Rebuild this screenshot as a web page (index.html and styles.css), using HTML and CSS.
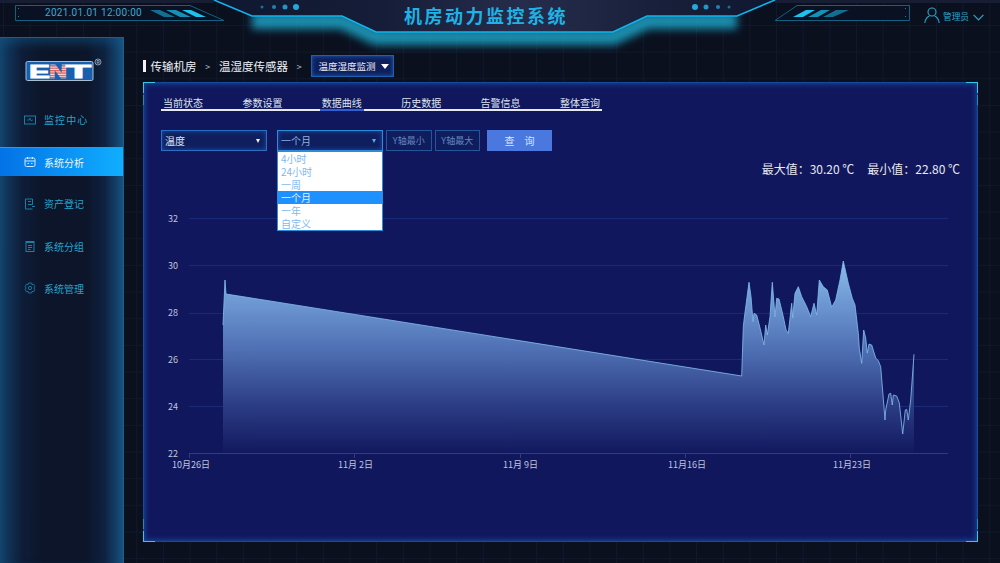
FILE: index.html
```html
<!DOCTYPE html>
<html lang="zh">
<head>
<meta charset="utf-8">
<title>机房动力监控系统</title>
<link rel="stylesheet" href="styles.css">
</head>
<body>
<div class="app">
  <header class="header">
    <svg class="header-art" viewBox="0 0 1000 60" width="1000" height="60" aria-hidden="true">
      <defs>
        <linearGradient id="hfill" x1="0" y1="0" x2="1" y2="0">
          <stop offset="0" stop-color="#0f1830"/>
          <stop offset=".3" stop-color="#151d38"/>
          <stop offset=".55" stop-color="#262d4c"/>
          <stop offset=".8" stop-color="#181f3a"/>
          <stop offset="1" stop-color="#0f1830"/>
        </linearGradient>
        <filter id="soft" filterUnits="userSpaceOnUse" x="200" y="0" width="600" height="60"><feGaussianBlur stdDeviation="4"/></filter>
      </defs>
      <polygon points="0,0 1000,0 1000,3 775,3 775,0 214,0 214,3 0,3" fill="#171d33"/>
      <polyline class="glow" points="252,21 342,21 376,37 613,37 647,21 737,21" filter="url(#soft)"/>
      <polygon points="214,0 252,16 342,16 376,32 613,32 647,16 737,16 775,0" fill="url(#hfill)"/>
      <polyline points="214,0 252,16 342,16 376,32 613,32 647,16 737,16 775,0" fill="none" stroke="#10b4ee" stroke-width="1.6"/>
      <circle cx="262" cy="7" r="1.500" fill="#1c6f9c"/><circle cx="274" cy="7" r="2" fill="#1f84b0"/><circle cx="285" cy="7" r="2.500" fill="#2297c6"/><circle cx="296" cy="7" r="3" fill="#25a8dc"/>
      <circle cx="695" cy="7" r="3" fill="#25a8dc"/><circle cx="706" cy="7" r="2.500" fill="#2297c6"/><circle cx="718" cy="7" r="2" fill="#1f84b0"/><circle cx="729" cy="7" r="1.500" fill="#1c6f9c"/>
      <polygon points="15.500,5.500 190,5.500 224,20.500 15.500,20.500" fill="#0a1122" stroke="#14607f"/>
      <polygon points="797,5.500 909.500,5.500 909.500,20.500 775,20.500" fill="#0a1122" stroke="#14607f"/>
      <g fill="#1a7da0"><rect x="18" y="8" width="1" height="1"/><rect x="18" y="16" width="1" height="1"/><rect x="905" y="8" width="1" height="1"/><rect x="905" y="16" width="1" height="1"/></g>
      <g>
        <polygon points="150,10 160,10 175,17 164,17" fill="#126f92"/>
        <polygon points="166,10 176,10 191,17 180,17" fill="#1590b8"/>
        <polygon points="182,10 191,10 206,17 196,17" fill="#1cc2ee"/>
        <polygon points="793,17 803,17 815,10 806,10" fill="#1cc2ee"/>
        <polygon points="808,17 818,17 830,10 821,10" fill="#1590b8"/>
        <polygon points="823,17 833,17 849,10 836,10" fill="#126f92"/>
      </g>
    </svg>
    <div class="clock">2021.01.01 12:00:00</div>
    <h1 class="title">机房动力监控系统</h1>
    <div class="user">
      <svg class="user-icon" viewBox="0 0 16 16" width="16" height="16" aria-hidden="true"><circle cx="8" cy="5" r="4" fill="none" stroke="#2aa6cc" stroke-width="1.100"/><path d="M.8 16c.4-4 3-6.600 4.600-7M15.200 16c-.4-4-3-6.600-4.600-7" fill="none" stroke="#2aa6cc" stroke-width="1.100"/></svg>
      <span>管理员</span>
      <svg class="chev" viewBox="0 0 11 7" width="11" height="7" aria-hidden="true"><path d="M.6.8 5.500 5.800 10.400.8" fill="none" stroke="#2aa6cc" stroke-width="1.200"/></svg>
    </div>
  </header>

  <div class="body">
    <aside class="sidebar">
      <div class="logo">
        <svg viewBox="0 0 78 24" width="78" height="24" aria-label="ENT">
          <defs>
            <pattern id="stripes" width="2" height="2.400" patternUnits="userSpaceOnUse"><rect width="2" height="1.300" fill="#e8574f"/><rect y="1.300" width="2" height="1.100" fill="#fbe3e0"/></pattern>
          </defs>
          <rect x="1" y="3.500" width="67" height="19" rx="1.500" fill="#1860ae" stroke="#a9bdd2"/>
          <text class="logo-e" x="4" y="19.500" textLength="21" lengthAdjust="spacingAndGlyphs">E</text>
          <text class="logo-n" x="24" y="19.500" textLength="18" lengthAdjust="spacingAndGlyphs">N</text>
          <text class="logo-e" x="41" y="19.500" textLength="25" lengthAdjust="spacingAndGlyphs">T</text>
          <circle cx="73" cy="4" r="3" fill="none" stroke="#9fb4c8" stroke-width=".8"/>
          <text class="logo-r" x="71.400" y="5.700">R</text>
        </svg>
      </div>
      <nav class="nav">
        <a class="nav-item">
          <svg viewBox="0 0 12 12" width="12" height="12" aria-hidden="true"><rect x=".5" y="2" width="11" height="8" fill="none" stroke="currentColor"/><path d="M3 6h2l1-2 1 3 1-1h1" fill="none" stroke="currentColor" stroke-width=".8"/></svg>
          <span class="wide">监控中心</span>
        </a>
        <a class="nav-item is-active">
          <svg viewBox="0 0 12 12" width="12" height="12" aria-hidden="true"><rect x="1" y="2" width="10" height="8.500" rx="1.500" fill="none" stroke="currentColor"/><path d="M1 5h10M3.500 1v2M8.500 1v2M3.500 7.500h1.500M7 7.500h1.500" fill="none" stroke="currentColor"/></svg>
          <span>系统分析</span>
        </a>
        <a class="nav-item">
          <svg viewBox="0 0 12 12" width="12" height="12" aria-hidden="true"><path d="M1.500 11V1h7v5.500H4M1.500 11h7M4 3.500h3M8 8.500h3" fill="none" stroke="currentColor"/></svg>
          <span>资产登记</span>
        </a>
        <a class="nav-item">
          <svg viewBox="0 0 12 12" width="12" height="12" aria-hidden="true"><rect x="2" y="1.500" width="8" height="10" fill="none" stroke="currentColor"/><path d="M2 2.500h8M4 5.500h4M4 7.500h4M4 9.500h2.500" fill="none" stroke="currentColor"/></svg>
          <span>系统分组</span>
        </a>
        <a class="nav-item">
          <svg viewBox="0 0 12 12" width="12" height="12" aria-hidden="true"><path d="M4.500 1h3l.5 1.600 1.500-.4 1.400 2.400L9.800 6l1.100 1.400-1.400 2.400-1.500-.4L7.500 11h-3L4 9.400l-1.500.4L1.100 7.400 2.200 6 1.100 4.600 2.500 2.200 4 2.600z" fill="none" stroke="currentColor" stroke-width=".9"/><circle cx="6" cy="6" r="1.700" fill="none" stroke="currentColor" stroke-width=".9"/></svg>
          <span>系统管理</span>
        </a>
      </nav>
    </aside>

    <main class="main">
      <div class="crumbs">
        <span class="crumb-bar"></span>
        <span class="crumb">传输机房</span>
        <span class="crumb-sep">&gt;</span>
        <span class="crumb">温湿度传感器</span>
        <span class="crumb-sep">&gt;</span>
        <span class="crumb-box">温度湿度监测<i class="crumb-caret"></i></span>
      </div>

      <section class="panel">
        <span class="corner tl"></span><span class="corner tr"></span><span class="corner bl"></span><span class="corner br"></span>
        <div class="tabs">
          <a class="tab">当前状态</a>
          <a class="tab">参数设置</a>
          <a class="tab is-active">数据曲线</a>
          <a class="tab">历史数据</a>
          <a class="tab">告警信息</a>
          <a class="tab">整体查询</a>
        </div>
        <div class="controls">
          <div class="select"><span>温度</span><i class="caret"></i></div>
          <div class="select select-open">
            <span>一个月</span><i class="caret caret-blue"></i>
            <ul class="dropdown">
              <li>4小时</li>
              <li>24小时</li>
              <li>一周</li>
              <li class="is-selected">一个月</li>
              <li>一年</li>
              <li>自定义</li>
            </ul>
          </div>
          <div class="inputs">
            <div class="input">Y轴最小</div>
            <div class="input">Y轴最大</div>
          </div>
          <button class="query" type="button">查&emsp;询</button>
        </div>
        <div class="stats"><span>最大值：30.20 ℃</span><span>最小值：22.80 ℃</span></div>
        <svg class="chart" viewBox="150 190 810 290" width="810" height="290" role="img" aria-label="温度曲线">
          <defs>
            <linearGradient id="area" x1="0" y1="0" x2="0" y2="1">
              <stop offset="0" stop-color="#8abde8"/>
              <stop offset=".2" stop-color="#6f9ad4"/>
              <stop offset=".46" stop-color="#4f70b4"/>
              <stop offset=".75" stop-color="#2c3d85"/>
              <stop offset="1" stop-color="#12195e"/>
            </linearGradient>
          </defs>
          <g class="grid">
            <line x1="189" x2="948" y1="218.500" y2="218.500"/>
            <line x1="189" x2="948" y1="265.500" y2="265.500"/>
            <line x1="189" x2="948" y1="313.500" y2="313.500"/>
            <line x1="189" x2="948" y1="359.500" y2="359.500"/>
            <line x1="189" x2="948" y1="406.500" y2="406.500"/>
          </g>
          <path class="area" d="M223 453V325L225 280L226 294L741.700 376L743.300 326.700L744.300 318L749 282.300L751 296.700L753 321.700L754 313.300L756.700 315L760 328L764 345L765.700 325L767.300 335L770 316.700L772.300 282.300L775 316.700L776.700 298.300L779 299L783.300 316.700L786 330L788.300 333.300L791.700 303.300L792.700 318L795 293.300L798.300 286.700L801.700 296.700L806.700 306.700L810.700 316.700L814 303.300L816.700 315L819.300 280L823.300 286.700L827.300 290L831.700 307.300L835.700 300L840 280L843.300 261L848.300 283.300L852.300 298.300L855 305L858.300 333.300L859.300 348.300L861.700 363.300L863.700 330L865.700 338L867.300 353L869 344L871.700 345L875.700 358L878.300 360.700L880.700 366.700L885 420L885.700 410L889 394L890.700 393.300L892.300 405L893.300 395L896.700 396L899.300 403L902.700 434L905.300 410L906.700 409.300L908.300 420L910.700 400L914 354.300V453Z"/>
          <path class="line" d="M223 325L225 280L226 294L741.700 376L743.300 326.700L744.300 318L749 282.300L751 296.700L753 321.700L754 313.300L756.700 315L760 328L764 345L765.700 325L767.300 335L770 316.700L772.300 282.300L775 316.700L776.700 298.300L779 299L783.300 316.700L786 330L788.300 333.300L791.700 303.300L792.700 318L795 293.300L798.300 286.700L801.700 296.700L806.700 306.700L810.700 316.700L814 303.300L816.700 315L819.300 280L823.300 286.700L827.300 290L831.700 307.300L835.700 300L840 280L843.300 261L848.300 283.300L852.300 298.300L855 305L858.300 333.300L859.300 348.300L861.700 363.300L863.700 330L865.700 338L867.300 353L869 344L871.700 345L875.700 358L878.300 360.700L880.700 366.700L885 420L885.700 410L889 394L890.700 393.300L892.300 405L893.300 395L896.700 396L899.300 403L902.700 434L905.300 410L906.700 409.300L908.300 420L910.700 400L914 354.300"/>
          <g class="axis">
            <line x1="189" x2="948" y1="453.500" y2="453.500"/>
            <line x1="189.500" x2="189.500" y1="453" y2="458"/>
            <line x1="354.500" x2="354.500" y1="453" y2="458"/>
            <line x1="520.500" x2="520.500" y1="453" y2="458"/>
            <line x1="685.500" x2="685.500" y1="453" y2="458"/>
            <line x1="850.500" x2="850.500" y1="453" y2="458"/>
          </g>
          <g class="labels">
            <text x="168" y="222">32</text>
            <text x="168" y="269">30</text>
            <text x="168" y="316">28</text>
            <text x="168" y="363">26</text>
            <text x="168" y="410">24</text>
            <text x="168" y="456.500">22</text>
            <text x="172" y="467.500">10月26日</text>
            <text x="338" y="467.500">11月 2日</text>
            <text x="503" y="467.500">11月 9日</text>
            <text x="668" y="467.500">11月16日</text>
            <text x="833" y="467.500">11月23日</text>
          </g>
        </svg>
      </section>
    </main>
  </div>
</div>
</body>
</html>
```

FILE: styles.css
```css
* { box-sizing: border-box; }

html, body { margin: 0; height: 100%; }

body {
  overflow: hidden;
  background-color: #0b101f;
  background-image:
    linear-gradient(#111829 1px, transparent 1px),
    linear-gradient(90deg, #111829 1px, transparent 1px);
  background-size: 26.67px 26.67px;
  background-position: 3px 25px;
  font-family: "Noto Sans CJK SC", "Noto Sans", sans-serif;
  color: #fff;
}

.app { width: 1000px; height: 563px; display: flex; flex-direction: column; }

/* header */
.header {
  position: relative;
  height: 37px;
  flex: none;
  display: flex;
  align-items: flex-start;
}
.header-art { position: absolute; left: 0; top: 0; pointer-events: none; }
.glow { fill: none; stroke: #1ea6c8; stroke-width: 16; opacity: .85; }
.clock {
  position: relative;
  margin: 6px 0 0 45px;
  width: 120px;
  font: 10px/14px Roboto, sans-serif;
  letter-spacing: .3px;
  white-space: nowrap;
  color: #3fa9d2;
}
.title {
  position: relative;
  margin: 4px 0 0 239px;
  width: 190px;
  font-size: 18px;
  line-height: 22px;
  font-weight: 700;
  letter-spacing: 2.500px;
  white-space: nowrap;
  color: #1eb3e6;
}
.user {
  position: relative;
  margin: 5px 0 0 auto;
  padding-right: 16px;
  display: flex;
  align-items: center;
  gap: 3px;
  font-size: 8.700px;
  line-height: 16px;
  color: #2aa6cc;
}
.user span { margin-top: 4px; }
.chev { margin: 5px 0 0 1px; }

/* layout */
.body { position: relative; flex: 1; display: flex; min-height: 0; }

.sidebar {
  width: 124px;
  flex: none;
  padding-top: 20px;
  background: linear-gradient(90deg, #124068 0, #0d1d38 18%, #0c1529 35%, #0c1529 70%, #0e2240 85%, #17517f 100%);
  border: 1px solid #215d88;
  border-left: 0;
  border-bottom: 0;
  box-shadow: inset 0 6px 10px rgba(20, 90, 140, .45);
}
.logo { padding-left: 25px; height: 24px; margin-bottom: 23px; }
.logo svg { display: block; }
.logo-e, .logo-n {
  font: 900 18px/1 "Liberation Sans", sans-serif;
  fill: #fff;
  stroke: #fff;
  stroke-width: .9;
}
.logo-n { fill: url(#stripes); stroke: url(#stripes); }
.logo-r { font: 700 4.500px "Liberation Sans", sans-serif; fill: #9fb4c8; }

.nav { display: flex; flex-direction: column; gap: 13.200px; }
.nav-item {
  height: 29px;
  display: flex;
  align-items: center;
  gap: 8px;
  padding-left: 24px;
  font-size: 10px;
  color: #26a4cc;
}
.nav-item svg { color: #1c7ea4; flex: none; }
.nav-item .wide { letter-spacing: 1.100px; }
.nav-item.is-active {
  color: #e8f6ff;
  background: linear-gradient(90deg, #0372e6, #10aeff);
  border-top: 1px solid #19a4f0;
}
.nav-item.is-active svg { color: #cfeaff; }

.main { flex: 1; padding: 18px 22px 21px 19px; display: flex; flex-direction: column; gap: 5px; min-width: 0; }

/* breadcrumb */
.crumbs { height: 22px; display: flex; align-items: center; color: #eef1f6; flex: none; }
.crumb-bar { width: 2.500px; height: 12px; background: #f4f4f6; margin-right: 5px; }
.crumb { font-size: 11.500px; line-height: 22px; }
.crumb-sep { font-size: 9px; width: 22.500px; text-align: center; color: #b9c2d0; }
.crumb-box {
  display: flex;
  align-items: center;
  height: 22px;
  width: 83px;
  padding-left: 7px;
  font-size: 9.500px;
  background: #0f1f5e;
  border: 1px solid #1f5fb0;
  box-shadow: inset 0 0 4px #1f5fb0;
}
.crumb-caret {
  margin-left: 5px;
  border-left: 4px solid transparent;
  border-right: 4px solid transparent;
  border-top: 5px solid #fff;
}

/* panel */
.panel {
  position: relative;
  flex: 1;
  padding-top: 13px;
  background: #10175c;
  border: 1px solid #164a9c;
  box-shadow: inset 0 0 6px #1b5ab8;
}
.corner { position: absolute; width: 12px; height: 11px; border: 0 solid #35c8e8; }
.corner::after { content: ""; position: absolute; width: 1px; height: 10px; background: #1f8fb8; }
.corner.tl { left: -1px; top: -1px; border-left-width: 1px; border-top-width: 1px; }
.corner.tl::after { left: -1px; top: 12px; }
.corner.tr { right: -1px; top: -1px; border-right-width: 1px; border-top-width: 1px; }
.corner.tr::after { right: -1px; top: 12px; }
.corner.bl { left: -1px; bottom: -1px; border-left-width: 1px; border-bottom-width: 1px; }
.corner.bl::after { left: -1px; bottom: 12px; }
.corner.br { right: -1px; bottom: -1px; border-right-width: 1px; border-bottom-width: 1px; }
.corner.br::after { right: -1px; bottom: 12px; }

.tabs {
  margin-left: 17px;
  width: 441px;
  height: 15px;
  display: flex;
  justify-content: space-between;
  border-bottom: 2px solid #e6e8f2;
}
.tab {
  width: 44px;
  height: 15px;
  text-align: center;
  font-size: 10px;
  line-height: 13px;
  color: #dfe4f0;
  border-bottom: 2px solid transparent;
}
.tab.is-active { border-bottom-color: #2f5fd0; }

/* controls */
.controls { margin: 19px 0 0 17px; height: 21px; display: flex; }
.select {
  position: relative;
  width: 106px;
  margin-right: 10px;
  padding-left: 3px;
  display: flex;
  align-items: center;
  justify-content: space-between;
  font-size: 10px;
  color: #dfe6f6;
  background: #0f1f5e;
  border: 1px solid #2a6fc4;
  box-shadow: inset 0 0 5px #1c4fa8;
}
.select-open { margin-right: 3px; color: #8fb2e4; border-color: #2d8cd8; }
.caret {
  margin-right: 6px;
  border-left: 2.500px solid transparent;
  border-right: 2.500px solid transparent;
  border-top: 4px solid #eef2fa;
}
.caret-blue { border-top-color: #59a8e8; }
.dropdown {
  position: absolute;
  left: -1px;
  top: 20px;
  width: 106px;
  height: 80px;
  margin: 0;
  padding: 0;
  list-style: none;
  background: #fff;
  border: 1px solid #2d8cd8;
  z-index: 3;
}
.dropdown li { height: 13px; line-height: 13px; padding-left: 3px; font-size: 10px; color: #7fb8f0; }
.dropdown li.is-selected { background: #1e90ff; color: #e6f2ff; }

.inputs { display: flex; gap: 3px; }
.input {
  width: 45.500px;
  display: flex;
  align-items: center;
  justify-content: center;
  font-size: 9px;
  white-space: nowrap;
  color: #6485c0;
  background: #0f1d5c;
  border: 1px solid #24569e;
}
.query {
  margin-left: 7px;
  width: 65px;
  padding: 0;
  border: 0;
  font: 10px "Noto Sans CJK SC", sans-serif;
  color: #d8e4fa;
  background: #4a78de;
}

.stats {
  margin: 10px 17px 0 0;
  height: 16px;
  display: flex;
  justify-content: flex-end;
  gap: 13px;
  font-size: 12px;
  line-height: 16px;
  color: #e8e8f0;
}

/* chart */
.chart { display: block; margin: 13px 0 0 6px; }
.grid line { stroke: #1a2a78; stroke-width: 1; }
.axis line { stroke: #2a3c8e; stroke-width: 1; }
.area { fill: url(#area); }
.line { fill: none; stroke: #7fb8ea; stroke-width: 1; stroke-opacity: .85; }
.labels text { font: 9px "Noto Sans CJK SC", Roboto, sans-serif; fill: #c0c4dc; }
```
